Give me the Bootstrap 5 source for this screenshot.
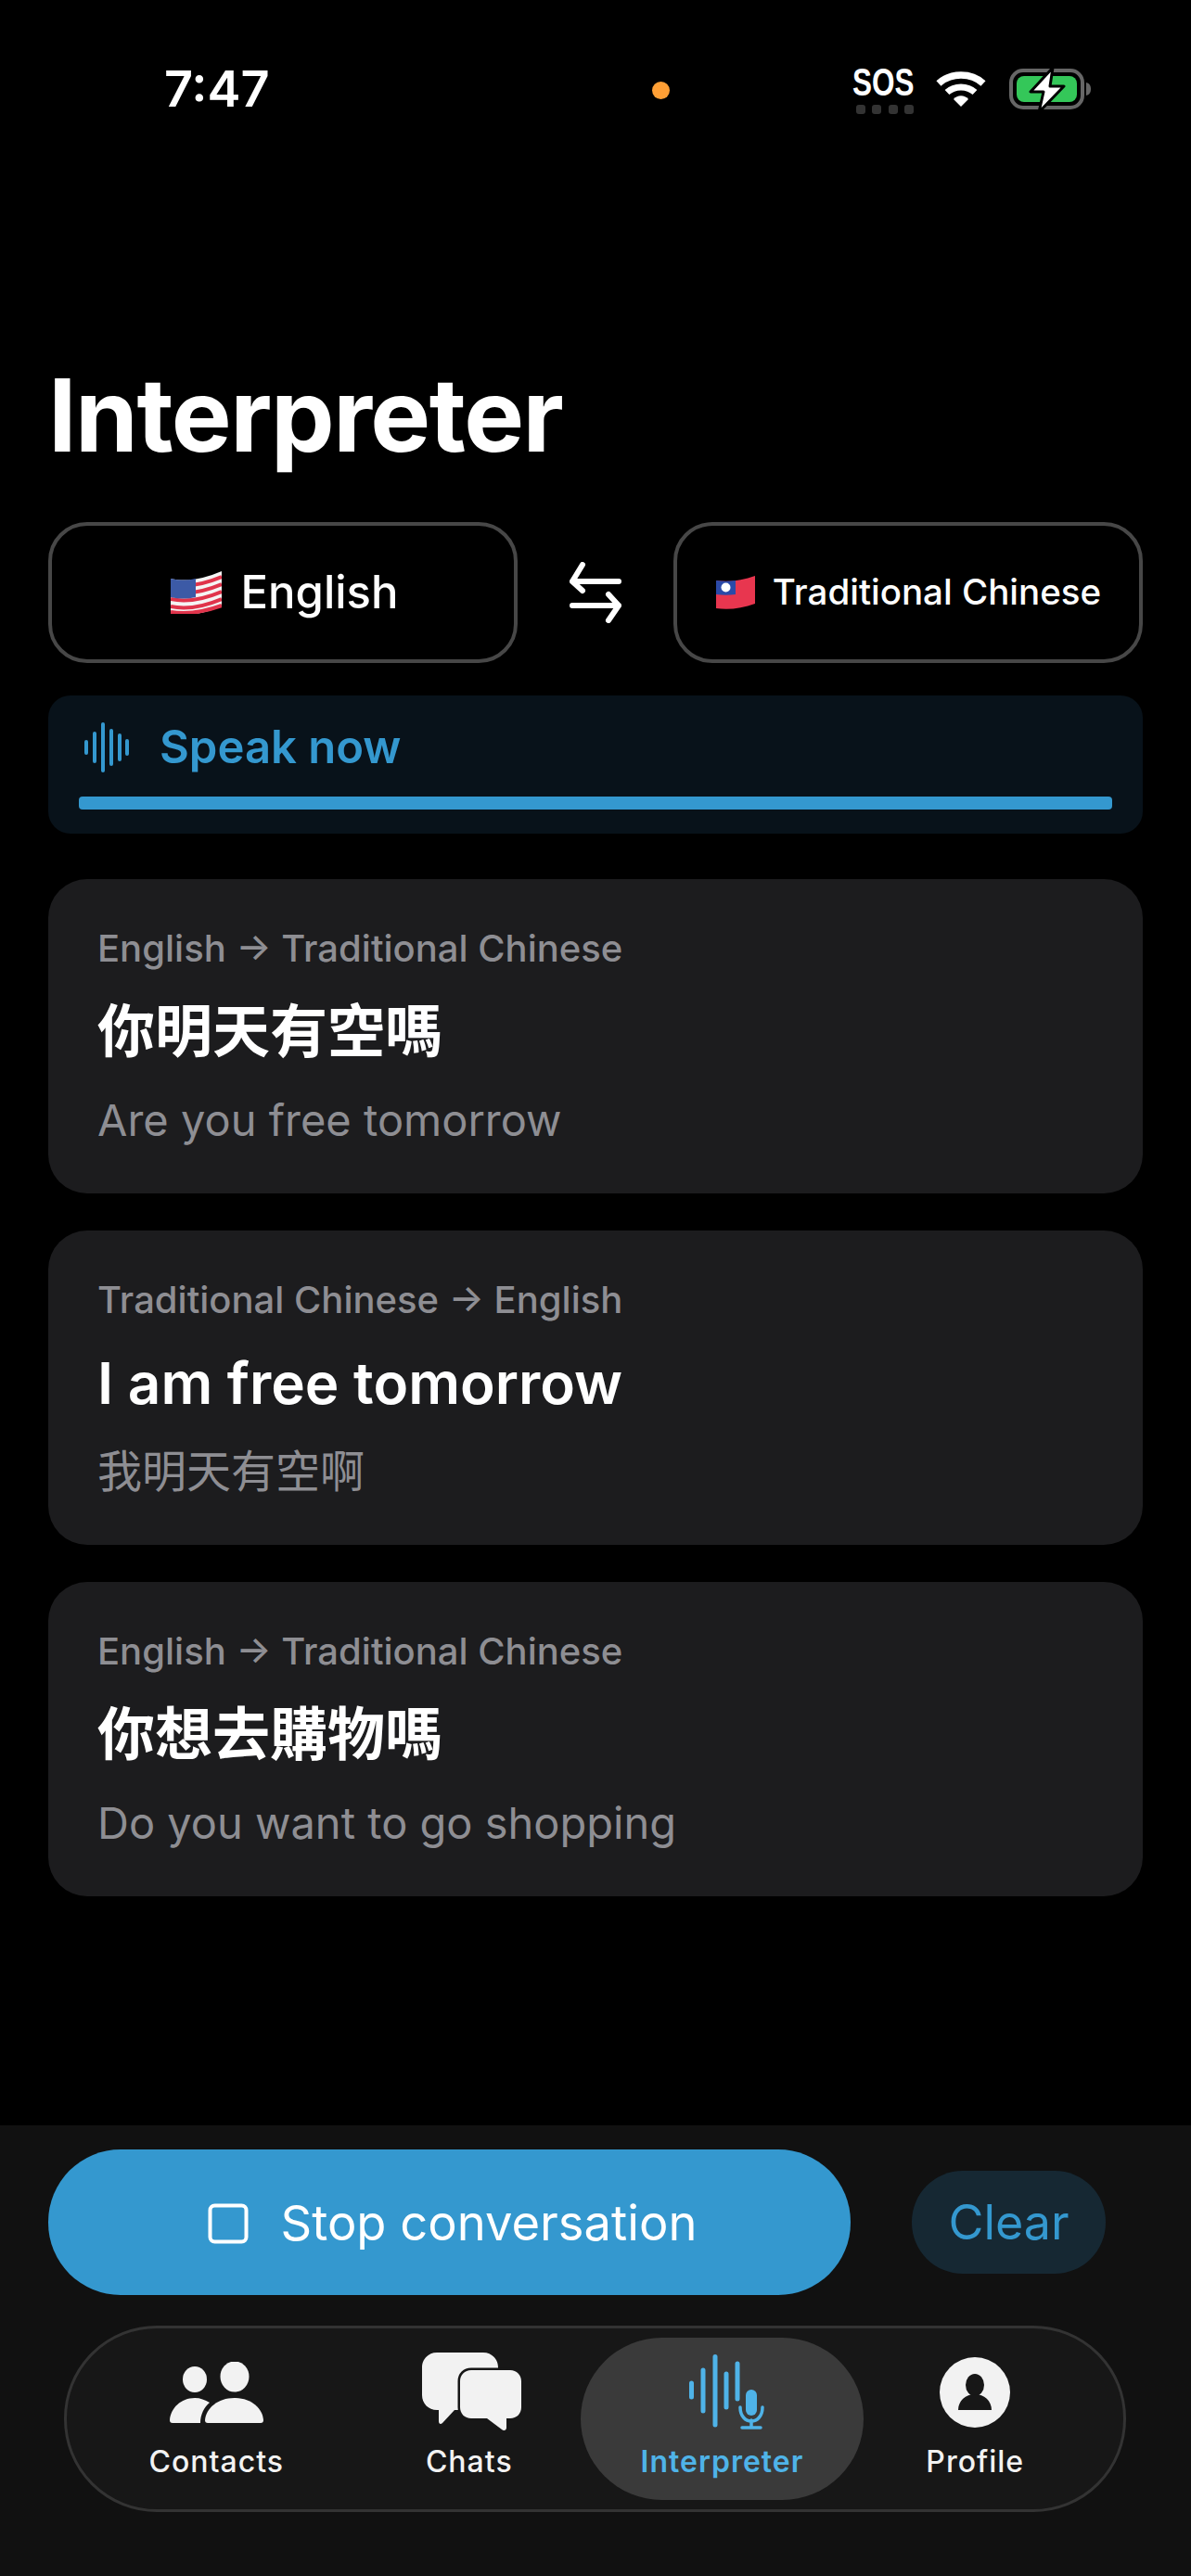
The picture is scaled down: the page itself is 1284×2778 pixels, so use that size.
<!DOCTYPE html>
<html lang="en">

<head>
    <meta charset="UTF-8">
    <title>Interpreter</title>
    <meta name="viewport" content="width=device-width, initial-scale=1">
    <link href="https://cdn.jsdelivr.net/npm/bootstrap@5.3.0/dist/css/bootstrap.min.css" rel="stylesheet">
    <style>
        body {
            background: #000;
            color: #fff;
            font-family: "Inter", "Noto Sans CJK TC", sans-serif;
        }

        .phone-page {
            width: 1284px;
            height: 2778px;
        }

        /* status bar */
        .status-row {
            height: 130px;
            padding: 70px 0 0 177px;
        }

        .clock {
            width: 115px;
            font-size: 54px;
            line-height: 52px;
            font-weight: 600;
        }

        .rec-dot {
            width: 19px;
            height: 19px;
            margin: 18px 0 0 411px;
            border-radius: 50%;
            background: #ff9f35;
        }

        .sos-wrap {
            width: 70px;
            margin-left: 197px;
        }

        .sos-text {
            display: inline-block;
            font-family: "Liberation Sans", sans-serif;
            font-size: 42px;
            line-height: 38px;
            font-weight: 700;
            white-space: nowrap;
            transform: scaleX(0.75);
            transform-origin: left top;
        }

        .sos-dot {
            width: 10px;
            height: 10px;
            border-radius: 3px;
            background: #333;
        }

        .wifi-icon {
            margin: 7px 0 0 20px;
        }

        .battery-icon {
            margin: 2px 0 0 24px;
        }

        /* header */
        .page-title {
            font-size: 109px;
            line-height: 130px;
            font-weight: 700;
            letter-spacing: -1.5px;
            margin: 252px 0 51px 52px;
        }

        .main-col {
            padding: 0 52px;
        }

        .lang-btn {
            width: 506px;
            height: 152px;
            border: 4px solid #474747;
            border-radius: 42px;
            background: #000;
            color: #fff;
            font-weight: 500;
            padding: 0;
        }

        .lang-btn:hover {
            background: #000;
            color: #fff;
            border-color: #474747;
        }

        .lang-en {
            font-size: 49px;
            gap: 21px;
            padding-left: 3px;
        }

        .lang-tw {
            font-size: 38.5px;
            gap: 18px;
        }

        .swap-col {
            width: 168px;
        }

        /* speak panel */
        .speak-panel {
            height: 149px;
            margin-top: 35px;
            padding: 29px 33px 0;
            border-radius: 24px;
            background: #08121a;
            color: #3498cf;
        }

        .speak-icon {
            margin: 0 33px 0 6px;
        }

        .speak-text {
            font-size: 49px;
            line-height: 54px;
            font-weight: 600;
        }

        .speak-bar {
            height: 14px;
            margin-top: 26px;
            border-radius: 4px;
            background: #3498cf;
        }

        /* history cards */
        .msg-list {
            margin-top: 49px;
            gap: 40px;
        }

        .msg-card {
            height: 339px;
            padding: 51px 53px 0;
            border: 0;
            border-radius: 42px;
            background: #1c1c1e;
            color: #fff;
        }

        .msg-route {
            font-size: 40px;
            line-height: 48px;
            font-weight: 500;
            color: #8e8e93;
        }

        .msg-main {
            font-size: 62px;
            line-height: 76px;
            font-weight: 600;
            margin-top: 28px;
        }

        .msg-sub {
            font-size: 47px;
            line-height: 60px;
            color: #8e8e93;
            margin-top: 27px;
        }

        .msg-cjk {
            font-size: 48px;
        }

        /* bottom */
        .bottom-dock {
            height: 486px;
            padding: 26px 0 0;
            background: #111;
        }

        .dock-actions {
            padding: 0 52px;
        }

        .stop-btn {
            width: 865px;
            height: 157px;
            padding: 2px 0 0 6px;
            border: 0;
            border-radius: 78px;
            background: #3498cf;
            color: #fff;
            font-size: 52.5px;
            gap: 35px;
        }

        .stop-btn:hover {
            background: #3498cf;
            color: #fff;
        }

        .clear-btn {
            width: 209px;
            height: 111px;
            margin-left: 66px;
            border: 0;
            border-radius: 55px;
            background: #162833;
            color: #3498cf;
            font-size: 52px;
            padding: 0;
        }

        .clear-btn:hover {
            background: #162833;
            color: #3498cf;
        }

        .tab-pill {
            width: 1145px;
            height: 201px;
            margin: 33px 0 0 69px;
            padding: 10px 25px;
            border: 3px solid #333;
            border-radius: 100px;
            background: #171717;
        }

        .tab-item {
            width: 272.5px;
            flex: none;
            color: #f2f2f2;
            font-size: 32px;
            line-height: 40px;
            font-weight: 500;
            letter-spacing: 1px;
        }

        .tab-icon {
            height: 88px;
            margin-top: 15px;
            margin-bottom: 11px;
        }

        .tab-active {
            width: 305px;
            margin: 0 -16px;
            border-radius: 88px;
            background: #3a3a3a;
            color: #4fb3e8;
            font-weight: 600;
        }

        .icon-chats {
            margin-left: 6px;
        }

        .icon-mic {
            margin-left: 10px;
        }
    </style>
</head>

<body>
    <div class="phone-page d-flex flex-column">

        <!-- Status bar -->
        <div class="status-row d-flex align-items-start">
            <div class="clock">7:47</div>
            <div class="rec-dot"></div>
            <div class="sos-wrap">
                <div class="sos-text">SOS</div>
                <div class="d-flex justify-content-between px-1 mt-1">
                    <span class="sos-dot"></span><span class="sos-dot"></span><span class="sos-dot"></span><span class="sos-dot"></span>
                </div>
            </div>
            <svg class="wifi-icon" width="54" height="38" viewBox="0 0 54 38">
                <path d="M3 13C16 1 38 1 51 13" fill="none" stroke="#fff" stroke-width="7.5" />
                <path d="M12 22.500C20 15 34 15 42 22.500" fill="none" stroke="#fff" stroke-width="7" />
                <path d="M19 30C23 25 31 25 35 30L27 38Z" fill="#fff" />
            </svg>
            <svg class="battery-icon" width="92" height="50" viewBox="0 0 92 50">
                <rect x="3" y="4" width="77" height="40" rx="13" fill="none" stroke="#666" stroke-width="4" />
                <rect x="9" y="10" width="65" height="28" rx="8" fill="#34c759" />
                <path d="M84 17C88 18 89 21 89 24C89 27 88 30 84 31Z" fill="#666" />
                <path d="M48 1L24 27H38L33 49L60 21H45Z" fill="#fff" stroke="#000" stroke-width="3" stroke-linejoin="round" />
            </svg>
        </div>

        <h1 class="page-title">Interpreter</h1>

        <div class="main-col">
            <!-- Language pickers -->
            <div class="d-flex align-items-center">
                <button type="button" class="btn lang-btn lang-en d-flex align-items-center justify-content-center">
                    <svg width="55" height="46" viewBox="0 0 55 46">
                        <path d="M0 8C18 12 36 8 55 0V38C36 46 18 49 0 45Z" fill="#f4f4f4" />
                        <g fill="none" stroke="#e0344b" stroke-width="4">
                            <path d="M0 14C18 18 36 14 55 6" />
                            <path d="M0 22C18 26 36 22 55 14" />
                            <path d="M0 30C18 34 36 30 55 22" />
                            <path d="M0 38C18 42 36 38 55 30" />
                            <path d="M0 44C18 47 36 44 55 37" />
                        </g>
                        <path d="M0 8C9 10 18 10 27 8V28C18 30 9 30 0 28Z" fill="#3c5aa6" />
                    </svg>
                    <span>English</span>
                </button>
                <div class="swap-col d-flex justify-content-center">
                    <svg width="56" height="66" viewBox="0 0 56 66">
                        <g fill="none" stroke="#fff" stroke-width="6" stroke-linecap="round" stroke-linejoin="round">
                            <path d="M53 21H3M14 3L3 21L14 31" />
                            <path d="M3 47H53M42 35L53 47L42 63" />
                        </g>
                    </svg>
                </div>
                <button type="button" class="btn lang-btn lang-tw d-flex align-items-center justify-content-center">
                    <svg width="44" height="36" viewBox="0 0 42 36">
                        <path d="M0 5C14 7 28 5 42 0V30C28 35 14 37 0 35Z" fill="#e8364f" />
                        <path d="M0 5C7 6 14 6 21 5V20C14 21 7 21 0 20Z" fill="#2b4aa8" />
                        <circle cx="10.500" cy="12.500" r="5" fill="#fff" />
                    </svg>
                    <span>Traditional Chinese</span>
                </button>
            </div>

            <!-- Listening state -->
            <div class="speak-panel">
                <div class="d-flex align-items-center">
                    <svg class="speak-icon flex-shrink-0" width="48" height="54" viewBox="0 0 48 54">
                        <g stroke="#3498cf" stroke-width="4" stroke-linecap="round">
                            <path d="M2 21V33M11 12V42M20 2V52M29 9V45M38 14V40M46 20V34" />
                        </g>
                    </svg>
                    <span class="speak-text">Speak now</span>
                </div>
                <div class="speak-bar"></div>
            </div>

            <!-- Conversation -->
            <div class="msg-list d-flex flex-column">
                <div class="card msg-card">
                    <div class="msg-route">English → Traditional Chinese</div>
                    <div class="msg-main">你明天有空嗎</div>
                    <div class="msg-sub">Are you free tomorrow</div>
                </div>
                <div class="card msg-card">
                    <div class="msg-route">Traditional Chinese → English</div>
                    <div class="msg-main">I am free tomorrow</div>
                    <div class="msg-sub msg-cjk">我明天有空啊</div>
                </div>
                <div class="card msg-card">
                    <div class="msg-route">English → Traditional Chinese</div>
                    <div class="msg-main">你想去購物嗎</div>
                    <div class="msg-sub">Do you want to go shopping</div>
                </div>
            </div>
        </div>

        <!-- Bottom actions and tabs -->
        <div class="bottom-dock mt-auto">
            <div class="dock-actions d-flex align-items-center">
                <button type="button" class="btn stop-btn d-flex align-items-center justify-content-center">
                    <svg width="44" height="44" viewBox="0 0 44 44">
                        <rect x="2.500" y="2.500" width="39" height="39" rx="5" fill="none" stroke="#fff" stroke-width="4" />
                    </svg>
                    <span>Stop conversation</span>
                </button>
                <button type="button" class="btn clear-btn">Clear</button>
            </div>

            <nav class="tab-pill d-flex align-items-stretch">
                <a class="tab-item d-flex flex-column align-items-center text-decoration-none">
                    <span class="tab-icon d-flex align-items-center">
                        <svg width="101" height="66" viewBox="0 0 101 66" fill="#f2f2f2">
                            <ellipse cx="27" cy="19" rx="13" ry="14" />
                            <ellipse cx="70" cy="16" rx="15.500" ry="16.500" />
                            <path d="M41 66H98Q101 66 101 63C100 50 88 39 69.500 39C52 39 39 50 38 63Q38 66 41 66Z" />
                            <path d="M3 66Q0 66 0 63C1 50 12 39 27 39C33 39 38 41 43 44C37 49 33 57 33 66Z" />
                        </svg>
                    </span>
                    <span>Contacts</span>
                </a>
                <a class="tab-item d-flex flex-column align-items-center text-decoration-none">
                    <span class="tab-icon d-flex align-items-center">
                        <svg class="icon-chats" width="108" height="86" viewBox="0 0 108 86" fill="#f2f2f2">
                            <path d="M16 0H66C75 0 82 7 82 16V46C82 55 75 62 66 62H35L22 76C20 78 18 77 18 74V62H16C7 62 0 55 0 46V16C0 7 7 0 16 0Z" />
                            <path d="M53 19H95C102 19 107 24 107 31V59C107 66 102 71 95 71H91V81C91 84 88 85 86 83L70 71H53C46 71 41 66 41 59V31C41 24 46 19 53 19Z" stroke="#171717" stroke-width="5" paint-order="stroke" />
                        </svg>
                    </span>
                    <span>Chats</span>
                </a>
                <a class="tab-item tab-active d-flex flex-column align-items-center text-decoration-none">
                    <span class="tab-icon d-flex align-items-center">
                        <svg class="icon-mic" width="82" height="82" viewBox="0 0 82 82" fill="none" stroke="#4fb3e8" stroke-linecap="round">
                            <path d="M2.500 31V46M15 17V61M28 2.500V76M40 21V57M52 10V48" stroke-width="5" />
                            <rect x="61" y="38" width="12" height="28" rx="6" fill="#4fb3e8" stroke="none" />
                            <path d="M55 57C55 77 79 77 79 57" stroke-width="3.500" />
                            <path d="M67 71V79M57 79H77" stroke-width="3.500" />
                        </svg>
                    </span>
                    <span>Interpreter</span>
                </a>
                <a class="tab-item d-flex flex-column align-items-center text-decoration-none">
                    <span class="tab-icon d-flex align-items-center">
                        <svg width="76" height="76" viewBox="0 0 76 76">
                            <circle cx="38" cy="38" r="38" fill="#f2f2f2" />
                            <ellipse cx="38" cy="30" rx="10" ry="12" fill="#171717" />
                            <path d="M20 57C20 47 28 40 38 40C48 40 56 47 56 57Z" fill="#171717" />
                        </svg>
                    </span>
                    <span>Profile</span>
                </a>
            </nav>
        </div>
    </div>

    <script src="https://cdn.jsdelivr.net/npm/bootstrap@5.3.0/dist/js/bootstrap.bundle.min.js"></script>
</body>

</html>
